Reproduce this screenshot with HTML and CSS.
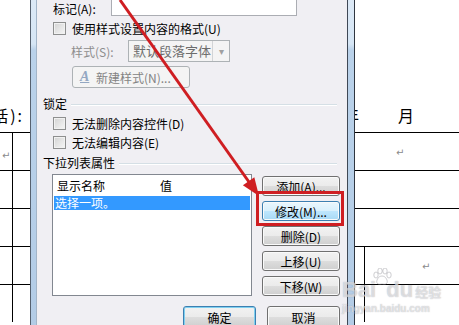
FILE: index.html
```html
<!DOCTYPE html>
<html lang="zh-CN">
<head>
  <meta charset="UTF-8" />
  <title>内容控件属性</title>
  <link rel="stylesheet" href="styles.css">
</head>
<body>
  <div class="screen">

    <div class="doc doc-left">
      <div class="doc-head left-head"><span>话):</span></div>
      <div class="doc-row"><div class="cell-narrow"><span class="ret">↵</span></div></div>
      <div class="doc-row"><div class="cell-narrow"></div></div>
      <div class="doc-row"><div class="cell-narrow"></div></div>
      <div class="doc-row"><div class="cell-narrow"></div></div>
      <div class="doc-row"><div class="cell-narrow"></div></div>
    </div>

    <div class="dialog">
      <div class="frame frame-left"></div>
      <div class="panel">

        <div class="row row-mark">
          <span class="label-mark">标记(A):</span>
          <div class="text-input"></div>
        </div>

        <div class="row row-check">
          <span class="check"></span>
          <span>使用样式设置内容的格式(U)</span>
        </div>

        <div class="row row-style">
          <span class="label-style">样式(S):</span>
          <div class="combo">
            <span class="combo-text">默认段落字体</span>
            <span class="combo-arrow">▾</span>
          </div>
        </div>

        <div class="btn btn-disabled btn-newstyle">
          <span class="style-icon">A</span>
          <span>新建样式(N)...</span>
        </div>

        <div class="group-head">锁定</div>
        <div class="row row-lock">
          <span class="check"></span>
          <span>无法删除内容控件(D)</span>
        </div>
        <div class="row row-lock">
          <span class="check"></span>
          <span>无法编辑内容(E)</span>
        </div>

        <div class="group-head group-list">下拉列表属性</div>
        <div class="list-area">
          <div class="list">
            <div class="list-head">
              <span class="col-name">显示名称</span>
              <span>值</span>
            </div>
            <div class="list-item">选择一项。</div>
          </div>
          <div class="list-buttons">
            <div class="btn">添加(A)...</div>
            <div class="btn btn-hot">修改(M)...</div>
            <div class="btn">删除(D)</div>
            <div class="btn">上移(U)</div>
            <div class="btn">下移(W)</div>
          </div>
        </div>

        <div class="dialog-buttons">
          <div class="btn btn-ok">确定</div>
          <div class="btn btn-cancel">取消</div>
        </div>

      </div>
      <div class="frame frame-right"></div>
    </div>

    <div class="doc doc-right">
      <div class="doc-head right-head">
        <span class="d-year">年</span>
        <span class="d-month">月</span>
        <span class="d-day">日</span>
      </div>
      <div class="doc-row"><span class="ret ret-r1">↵</span></div>
      <div class="doc-row"></div>
      <div class="doc-row"></div>
      <div class="doc-row"><div class="cell-right"></div><span class="ret ret-r4">↵</span></div>
      <div class="doc-row"><div class="cell-right"></div></div>
    </div>

    <!-- annotation drawn over the screenshot -->
    <svg class="arrow" width="459" height="325" viewBox="0 0 459 325">
      <line x1="120" y1="0" x2="249" y2="182" stroke="#cf1e22" stroke-width="3" />
      <polygon points="259,196 242.9,185.3 254.3,177.3" fill="#cf1e22" />
    </svg>
    <div class="callout"></div>

    <div class="watermark">
      <div class="wm-top">
        <span class="wm-bai">Bai</span>
        <svg class="wm-paw" width="20" height="18" viewBox="0 0 20 18">
          <ellipse cx="4" cy="7" rx="2.2" ry="3" />
          <ellipse cx="8" cy="3" rx="2.2" ry="3" />
          <ellipse cx="13" cy="3" rx="2.2" ry="3" />
          <ellipse cx="17" cy="7" rx="2.2" ry="3" />
          <path d="M10 8 C6 8 4 13 5 15 C6 17 9 16 10 16 C11 16 14 17 15 15 C16 13 14 8 10 8 Z" />
        </svg>
        <span class="wm-du">du</span>
        <span class="wm-jy">经验</span>
      </div>
      <div class="wm-url">jingyan.baidu.com</div>
    </div>

  </div>
</body>
</html>
```

FILE: styles.css
```css
* {
  box-sizing: border-box;
}
body {
  margin: 0;
  width: 459px;
  height: 325px;
  overflow: hidden;
  background: #fff;
  font-family: "Noto Sans CJK SC", sans-serif;
  font-size: 12px;
  color: #000;
}
.screen {
  position: relative;
  display: flex;
  width: 459px;
  height: 325px;
  overflow: hidden;
}

/* document behind the dialog */
.doc {
  flex: none;
  background: #fff;
  overflow: hidden;
}
.doc-left {
  width: 30px;
}
.doc-right {
  flex: 1;
}
.doc-head {
  height: 132px;
  display: flex;
  align-items: flex-end;
  padding-bottom: 7px;
  font-size: 16px;
  line-height: 20px;
  white-space: nowrap;
}
.left-head {
  justify-content: flex-end;
  padding-right: 6px;
}
.left-head span {
  flex: none;
  letter-spacing: 2px;
}
.right-head span {
  flex: none;
}
.d-year {
  margin-left: -12px;
}
.d-month {
  margin-left: 39px;
}
.d-day {
  margin-left: 43px;
}
.doc-row {
  height: 38px;
  border-top: 1px solid #000;
  display: flex;
}
.cell-narrow {
  width: 13px;
  border-right: 1px solid #000;
  padding: 12px 0 0 2px;
}
.cell-right {
  width: 10px;
  border-right: 1px solid #000;
}
.ret {
  font-family: "DejaVu Sans", sans-serif;
  font-size: 10px;
  line-height: 12px;
  color: #8a8a8a;
}
.ret-r1 {
  margin: 14px 0 0 41px;
}
.ret-r4 {
  margin: 14px 0 0 57px;
}

/* dialog window */
.dialog {
  flex: none;
  display: flex;
  width: 325px;
  height: 325px;
}
.frame {
  flex: none;
  background: linear-gradient(#dce9f6 0, #d6e6f5 44px, #bad2ea 50px, #b3cce6 100%);
}
.frame-left {
  width: 7px;
  border-left: 1px solid #56616f;
  border-right: 1px solid #a3b5c8;
}
.frame-right {
  width: 8px;
  border-left: 1px solid #3f4855;
  border-right: 1px solid #2f3640;
}
.panel {
  width: 310px;
  background: #f0eff3;
  padding: 0 7px 0 6px;
  overflow: hidden;
}
.row {
  display: flex;
  align-items: center;
  white-space: nowrap;
}
.row-mark {
  height: 20px;
  margin-top: -4px;
  padding-left: 10px;
}
.label-mark {
  width: 58px;
  padding-top: 4px;
}
.text-input {
  width: 186px;
  height: 20px;
  background: #fff;
  border: 1px solid #abadb3;
}
.row-check {
  height: 20px;
  margin-top: 2px;
  padding-left: 10px;
}
.check {
  flex: none;
  width: 13px;
  height: 13px;
  margin-right: 6px;
  border: 1px solid #8e8f8f;
  background: linear-gradient(135deg, #d3d3d3, #f6f6f6);
  box-shadow: inset 0 0 0 1px #f1f1f1;
}
.row-style {
  height: 22px;
  margin-top: 2px;
  padding-left: 28px;
  color: #8d8d8d;
}
.label-style {
  width: 57px;
}
.combo {
  display: flex;
  width: 102px;
  height: 22px;
  border: 1px solid #adb2b5;
  background: #f4f4f4;
}
.combo-text {
  flex: 1;
  padding-left: 4px;
  font-size: 13px;
  line-height: 20px;
  color: #6d6d6d;
}
.combo-arrow {
  width: 17px;
  border-left: 1px solid #d2d4d6;
  text-align: center;
  font-size: 10px;
  line-height: 20px;
  color: #a0a0a0;
}

/* buttons */
.btn {
  display: flex;
  align-items: center;
  justify-content: center;
  height: 20px;
  border: 1px solid #707070;
  border-radius: 3px;
  background: linear-gradient(#f2f2f2 0%, #ebebeb 50%, #dddddd 51%, #cfcfcf 100%);
  box-shadow: inset 0 0 0 1px #fafafa;
  white-space: nowrap;
}
.btn-hot {
  border-color: #3c7fb1;
  background: linear-gradient(#eaf6fd 0%, #d9f0fc 50%, #bee6fd 51%, #a7d9f5 100%);
}
.btn-disabled {
  border-color: #adb2b5;
  background: #f4f4f4;
  box-shadow: none;
  color: #838383;
}
.btn-newstyle {
  width: 118px;
  height: 22px;
  margin: 4px 0 0 29px;
  justify-content: flex-start;
  padding-left: 7px;
}
.style-icon {
  width: 14px;
  margin-right: 2px;
  font-family: "Liberation Serif", serif;
  font-weight: bold;
  font-style: italic;
  font-size: 14px;
  line-height: 14px;
  color: #93a7c2;
  text-decoration: underline;
}

/* groups */
.group-head {
  display: flex;
  align-items: center;
  height: 16px;
  margin-top: 8px;
  line-height: 16px;
  white-space: nowrap;
}
.group-head::after {
  content: "";
  flex: 1;
  margin: 1px 3px 0 4px;
  border-top: 1px solid #d5dfe5;
  border-bottom: 1px solid #fff;
}
.group-list {
  margin-top: 3px;
}
.row-lock {
  height: 19px;
  padding-left: 10px;
}
.group-head + .row-lock {
  margin-top: 2px;
}

/* list */
.list-area {
  display: flex;
  margin-top: 3px;
  padding-left: 9px;
}
.list {
  width: 200px;
  height: 122px;
  background: #fff;
  border: 1px solid #828790;
}
.list-head {
  display: flex;
  align-items: center;
  height: 21px;
  padding-left: 4px;
}
.col-name {
  width: 103px;
}
.list-item {
  height: 14px;
  margin: 0 1px;
  padding-left: 1px;
  background: #3399ff;
  color: #fff;
  line-height: 14px;
}
.list-buttons {
  display: flex;
  flex-direction: column;
  gap: 5px;
  width: 78px;
  margin: 2px 0 0 auto;
}
.dialog-buttons {
  display: flex;
  justify-content: flex-end;
  gap: 11px;
  margin-top: 10px;
}
.dialog-buttons .btn {
  width: 73px;
  height: 22px;
}
.btn-ok {
  border-color: #3c7fb1;
  box-shadow: inset 0 0 0 1px #7fd0f0;
}

/* annotation overlay */
.arrow {
  position: absolute;
  left: 0;
  top: 0;
  pointer-events: none;
}
.callout {
  position: absolute;
  left: 256px;
  top: 191px;
  width: 88px;
  height: 35px;
  border: 3px solid #cf1e22;
}

/* site watermark */
.watermark {
  position: absolute;
  left: 342px;
  top: 268px;
  color: rgba(255, 255, 255, 0.55);
  text-shadow: 0 0 1px rgba(110, 110, 120, 0.55);
  font-family: "Liberation Sans", sans-serif;
  font-weight: bold;
}
.wm-top {
  display: flex;
  align-items: flex-end;
  height: 34px;
}
.wm-bai,
.wm-du {
  font-size: 22px;
  line-height: 24px;
}
.wm-paw {
  align-self: flex-start;
  fill: rgba(255, 255, 255, 0.5);
  stroke: rgba(120, 120, 130, 0.45);
  stroke-width: 0.8;
  margin: 0 -6px 0 -4px;
}
.wm-jy {
  font-family: "Noto Sans CJK SC", sans-serif;
  font-size: 13px;
  line-height: 20px;
  margin-left: 2px;
}
.wm-url {
  margin-top: 2px;
  font-size: 10px;
  line-height: 10px;
}
```
